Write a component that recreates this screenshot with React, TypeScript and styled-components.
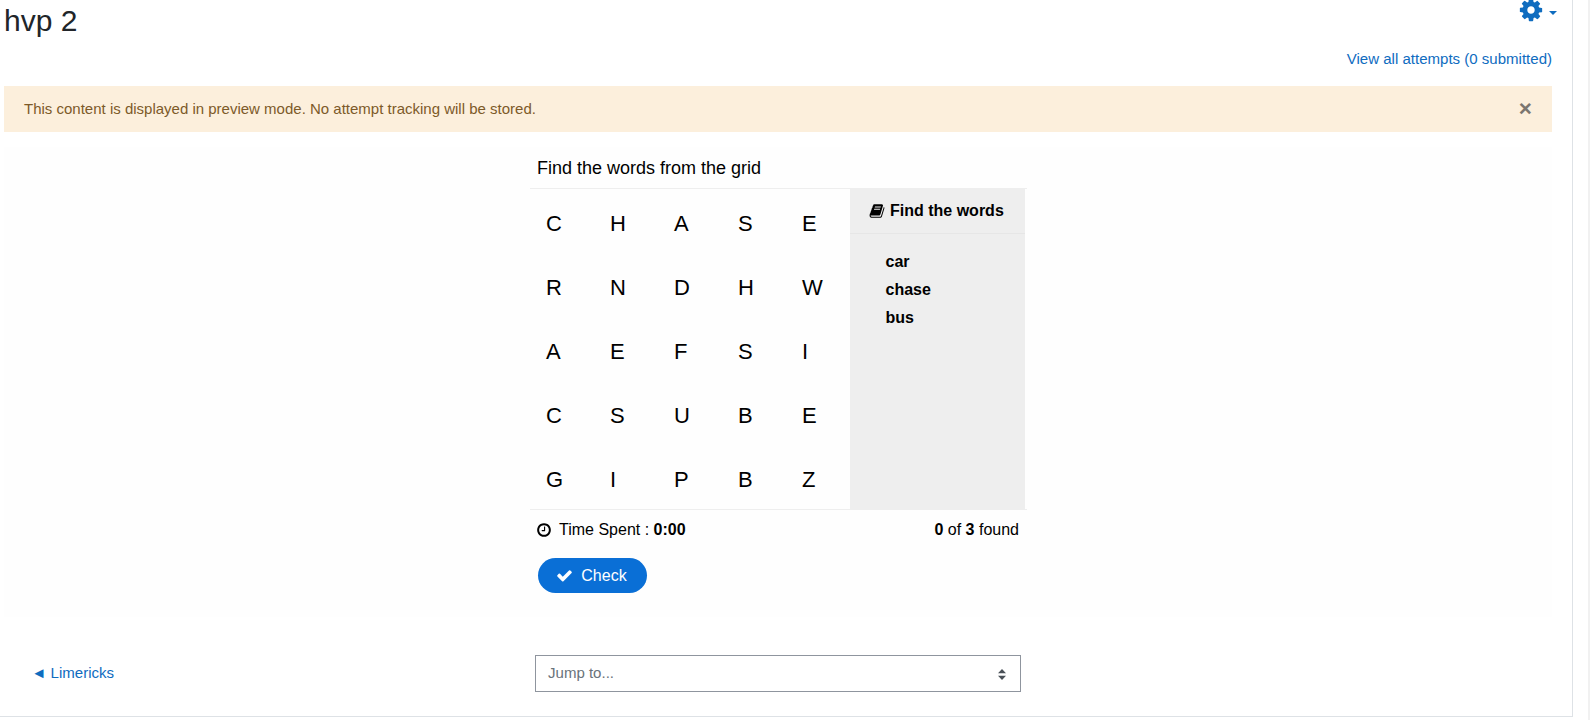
import styled, { createGlobalStyle } from "styled-components";

const GlobalStyle = createGlobalStyle`
  html, body {
    margin: 0;
    padding: 0;
    height: 720px;
    overflow: hidden;
    background: #fff;
    font-family: "Liberation Sans", Arial, sans-serif;
    color: #000;
  }
`;

const Shell = styled.div`
  width: 1590px;
  height: 720px;
  display: flex;
  background: #fff;
`;

const Page = styled.div`
  width: 1573px;
  height: 717px;
  box-sizing: border-box;
  padding: 0 20px 0 4px;
  border-right: 1px solid #dee2e6;
  border-bottom: 1px solid #dee2e6;
  display: flex;
  flex-direction: column;
`;

const ScrollEdge = styled.div`
  margin-left: 15px;
  width: 2px;
  background: #f1f1f1;
`;

const Header = styled.div`
  height: 46px;
  display: flex;
  justify-content: space-between;
  align-items: flex-start;
`;

const Title = styled.h1`
  margin: 4px 0 0;
  font-size: 30px;
  font-weight: 400;
  line-height: 34px;
  color: #212529;
`;

const Gear = styled.div`
  display: flex;
  align-items: center;
  gap: 5px;
  margin: -3px -5px 0 0;
  color: #0f6cbf;
`;

const Caret = styled.span`
  width: 0;
  height: 0;
  border-left: 4.5px solid transparent;
  border-right: 4.5px solid transparent;
  border-top: 4.5px solid #0f6cbf;
  margin-top: 5px;
`;

const Icon = styled.svg<{ $size: number }>`
  width: ${({ $size }) => $size}px;
  height: ${({ $size }) => $size}px;
  fill: currentColor;
  flex: none;
`;

const AttemptsRow = styled.div`
  height: 40px;
  display: flex;
  justify-content: flex-end;
  align-items: flex-start;
`;

const Link = styled.a`
  color: #0f6cbf;
  font-size: 15.04px;
  line-height: 26px;
  text-decoration: none;
`;

const Alert = styled.div`
  height: 46px;
  flex: none;
  box-sizing: border-box;
  padding: 0 20px 2px;
  display: flex;
  align-items: center;
  justify-content: space-between;
  background: #fcefdc;
  color: #7d5a29;
  font-size: 15px;
`;

const Close = styled.span`
  color: #7b766f;
  font-size: 22.5px;
  font-weight: 700;
  line-height: 22px;
  margin: 2px 0 0;
`;

const Activity = styled.div`
  margin-top: 15px;
  height: 470px;
  flex: none;
  background: #fefefe;
  display: flex;
  justify-content: center;
`;

const Game = styled.div`
  width: 497px;
  margin-left: 1px;
  display: flex;
  flex-direction: column;
`;

const Task = styled.div`
  height: 42px;
  flex: none;
  box-sizing: border-box;
  padding: 10px 7px 0;
  font-size: 18px;
  line-height: 22px;
  border-bottom: 1px solid #eee;
`;

const Board = styled.div`
  height: 320px;
  flex: none;
  display: flex;
  border-bottom: 1px solid #eee;
`;

const Grid = styled.div`
  width: 320px;
  display: grid;
  grid-template-columns: repeat(5, 64px);
  grid-template-rows: repeat(5, 64px);
`;

const Cell = styled.div`
  padding: 22px 0 0 16px;
  font-size: 22px;
  line-height: 26px;
  box-sizing: border-box;
`;

const Side = styled.div`
  width: 175px;
  background: #eee;
  font-weight: 700;
`;

const SideHead = styled.div`
  height: 45px;
  box-sizing: border-box;
  display: flex;
  align-items: center;
  gap: 5px;
  padding: 0 0 0 19px;
  font-size: 16px;
  border-bottom: 1px solid #e6e6e6;
`;

const WordList = styled.ul`
  list-style: none;
  margin: 0;
  padding: 14px 0 0 35.5px;
`;

const Word = styled.li`
  font-size: 16px;
  line-height: 28px;
`;

const Status = styled.div`
  height: 40px;
  flex: none;
  box-sizing: border-box;
  padding: 0 8px 0 6px;
  display: flex;
  align-items: center;
  justify-content: space-between;
  font-size: 16px;
`;

const Timer = styled.div`
  display: flex;
  align-items: center;
  gap: 7px;
`;

const CheckButton = styled.button`
  margin: 8px 0 0 8px;
  width: 109px;
  height: 35px;
  border: 0;
  border-radius: 18px;
  background: #0a6fd6;
  color: #fff;
  font-family: inherit;
  font-size: 16px;
  display: flex;
  align-items: center;
  justify-content: center;
  gap: 8px;
  padding: 0 2px 0 0;
`;

const Footer = styled.div`
  margin-top: 38px;
  display: flex;
  align-items: center;
`;

const PrevLink = styled(Link)`
  width: 531px;
  box-sizing: border-box;
  padding: 0 0 2px 27.5px;
`;

const JumpSelect = styled.div`
  width: 486px;
  height: 37px;
  box-sizing: border-box;
  border: 1px solid #8f959e;
  padding: 0 12px 3px;
  display: flex;
  align-items: center;
  justify-content: space-between;
  color: #6a737b;
  font-size: 15.04px;
`;

const Updown = styled.svg`
  width: 8px;
  height: 11px;
  margin: 4px 2px 0 0;
  fill: #495057;
`;

const paths = {
  cog: "M1152 896q0-106-75-181t-181-75-181 75-75 181 75 181 181 75 181-75 75-181zm512-109v222q0 12-8 23t-20 13l-185 28q-19 54-39 91 35 50 107 138 10 12 10 25t-9 23q-27 37-99 108t-94 71q-12 0-26-9l-138-108q-44 23-91 38-16 136-29 186-7 28-36 28h-222q-14 0-24.5-8.5t-11.5-21.5l-28-184q-49-16-90-37l-141 107q-10 9-25 9-14 0-25-11-126-114-165-168-7-10-7-23 0-12 8-23 15-21 51-66.5t54-70.5q-27-50-41-99l-183-27q-13-2-21-12.5t-8-23.5v-222q0-12 8-23t19-13l186-28q14-46 39-92-40-57-107-138-10-12-10-24 0-10 9-23 26-36 98.5-107.5t94.5-71.5q13 0 26 10l138 107q44-23 91-38 16-136 29-186 7-28 36-28h222q14 0 24.5 8.5t11.5 21.5l28 184q49 16 90 37l142-107q9-9 24-9 13 0 25 10 129 119 165 170 7 8 7 22 0 12-8 23-15 21-51 66.5t-54 70.5q26 50 41 98l183 28q13 2 21 12.5t8 23.5z",
  book: "M1703 478q40 57 18 129l-275 906q-19 64-76.5 107.5t-122.5 43.5h-923q-77 0-148.5-53.5t-99.5-131.5q-24-67-2-127 0-4 3-27t4-37q1-8-3-21.5t-3-19.5q2-11 8-21t16.5-23.5 16.5-23.5q23-38 45-91.5t30-91.5q3-10 .5-30t-.5-28q3-11 17-28t17-23q21-36 42-92t25-90q1-9-2.5-32t.5-28q4-13 22-30.5t22-22.5q19-26 42.5-84.5t27.5-96.5q1-8-3-25.5t-2-26.5q2-8 9-18t18-23 17-21q8-12 16.5-30.5t15-35 16-36 19.5-32 26.5-23.5 36-11.5 47.5 5.5l-1 3q38-9 51-9h761q74 0 114 56t18 130l-274 906q-36 119-71.5 153.5t-128.5 34.5h-869q-27 0-38 15-11 16-1 43 24 70 144 70h923q29 0 56-15.5t35-41.5l300-987q7-22 5-57 38 15 59 43zm-1064 2q-4 13 2 22.5t20 9.5h608q13 0 25.5-9.5t16.5-22.5l21-64q4-13-2-22.5t-20-9.5h-608q-13 0-25.5 9.5t-16.5 22.5zm-83 256q-4 13 2 22.5t20 9.5h608q13 0 25.5-9.5t16.5-22.5l21-64q4-13-2-22.5t-20-9.5h-608q-13 0-25.5 9.5t-16.5 22.5z",
  clock:
    "M1024 544v448q0 14-9 23t-23 9h-320q-14 0-23-9t-9-23v-64q0-14 9-23t23-9h224v-352q0-14 9-23t23-9h64q14 0 23 9t9 23zm416 352q0-148-73-273t-198-198-273-73-273 73-198 198-73 273 73 273 198 198 273 73 273-73 198-198 73-273zm224 0q0 209-103 385.5t-279.5 279.5-385.5 103-385.5-103-279.5-279.5-103-385.5 103-385.5 279.5-279.5 385.5-103 385.5 103 279.5 279.5 103 385.5z",
  check:
    "M1671 566q0 40-28 68l-724 724-136 136q-28 28-68 28t-68-28l-136-136-362-362q-28-28-28-68t28-68l136-136q28-28 68-28t68 28l294 295 656-657q28-28 68-28t68 28l136 136q28 28 28 68z",
};

const FontIcon = ({ name, size }: { name: keyof typeof paths; size: number }) => (
  <Icon $size={size} viewBox="0 0 1792 1792">
    <path d={paths[name]} />
  </Icon>
);

const rows = ["CHASE", "RNDHW", "AEFSI", "CSUBE", "GIPBZ"];
const words = ["car", "chase", "bus"];

const App = () => {
  return (
    <Shell>
      <GlobalStyle />
      <Page>
        <Header>
          <Title>hvp 2</Title>
          <Gear>
            <FontIcon name="cog" size={26} />
            <Caret />
          </Gear>
        </Header>
        <AttemptsRow>
          <Link href="#">View all attempts (0 submitted)</Link>
        </AttemptsRow>
        <Alert>
          This content is displayed in preview mode. No attempt tracking will be stored.
          <Close>×</Close>
        </Alert>
        <Activity>
          <Game>
            <Task>Find the words from the grid</Task>
            <Board>
              <Grid>
                {rows.join("").split("").map((letter, i) => (
                  <Cell key={i}>{letter}</Cell>
                ))}
              </Grid>
              <Side>
                <SideHead>
                  <FontIcon name="book" size={16} />
                  Find the words
                </SideHead>
                <WordList>
                  {words.map((word) => (
                    <Word key={word}>{word}</Word>
                  ))}
                </WordList>
              </Side>
            </Board>
            <Status>
              <Timer>
                <FontIcon name="clock" size={16} />
                <span>
                  Time Spent : <b>0:00</b>
                </span>
              </Timer>
              <span>
                <b>0</b> of <b>3</b> found
              </span>
            </Status>
            <CheckButton>
              <FontIcon name="check" size={17} />
              Check
            </CheckButton>
          </Game>
        </Activity>
        <Footer>
          <PrevLink href="#">◄ Limericks</PrevLink>
          <JumpSelect>
            Jump to...
            <Updown viewBox="0 0 8 11">
              <path d="M4 0l4 4.3H0zM4 11L0 6.7h8z" />
            </Updown>
          </JumpSelect>
        </Footer>
      </Page>
      <ScrollEdge />
    </Shell>
  );
};

export default App;
